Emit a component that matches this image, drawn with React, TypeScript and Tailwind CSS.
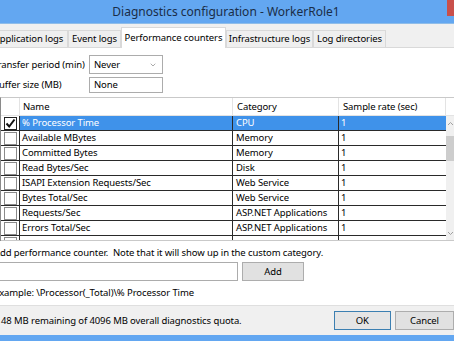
import { ChevronDown } from "lucide-react";

const ROWS: [string, string][] = [
  ["% Processor Time", "CPU"],
  ["Available MBytes", "Memory"],
  ["Committed Bytes", "Memory"],
  ["Read Bytes/Sec", "Disk"],
  ["ISAPI Extension Requests/Sec", "Web Service"],
  ["Bytes Total/Sec", "Web Service"],
  ["Requests/Sec", "ASP.NET Applications"],
  ["Errors Total/Sec", "ASP.NET Applications"],
  ["", ""],
];

const TABS = [
  { label: "Application logs", w: "w-[79px] ml-[-11px]" },
  { label: "Event logs", w: "w-[53px]" },
  { label: "Performance counters", w: "w-[105px]", active: true },
  { label: "Infrastructure logs", w: "w-[87px]" },
  { label: "Log directories", w: "w-[73px]" },
];

function Checkbox({ checked }: { checked?: boolean }) {
  return (
    <div
      className={`w-[13px] h-[13px] bg-white border ${
        checked ? "border-[#222]" : "border-[#8a8a8a]"
      } flex items-center justify-center`}
    >
      {checked && (
        <svg width="11" height="11" viewBox="0 0 11 11">
          <path d="M1.5 5.5 L4.2 8.5 L9.5 1.5" fill="none" stroke="#111" strokeWidth="2" />
        </svg>
      )}
    </div>
  );
}

export default function App() {
  return (
    <div className="w-[454px] h-[341px] overflow-hidden bg-white flex flex-col font-['Noto_Sans',sans-serif] text-[9.5px] tracking-[-0.1px] text-black leading-[12px] whitespace-nowrap">
      {/* Title bar */}
      <div className="relative h-[24px] shrink-0 bg-[#63a7f1] border-b border-[#8fbde9] flex items-center justify-center">
        <span className="text-[12px] tracking-[0px] text-[#1a2d47] ml-[-2px]">Diagnostics configuration - WorkerRole1</span>
        <div className="absolute right-0 top-0 w-[7px] h-[16px] bg-[#c9504b]" />
      </div>

      {/* Tab strip */}
      <div className="h-[24px] shrink-0 bg-[#f0f0f0] flex items-end border-b border-[#d9d9d9]">
        {TABS.map((t) =>
          t.active ? (
            <div
              key={t.label}
              className={`${t.w} h-[21px] mb-[-1px] bg-white border-x border-t border-[#d9d9d9] flex items-center justify-center`}
            >
              {t.label}
            </div>
          ) : (
            <div
              key={t.label}
              className={`${t.w} h-[17px] bg-[#efefef] border-l border-t border-r border-[#d9d9d9] flex items-center justify-center`}
            >
              {t.label}
            </div>
          )
        )}
      </div>

      {/* Content */}
      <div className="flex-1 flex flex-col">
        <div className="flex items-center h-[19px] mt-[7px]">
          <span className="w-[96px] ml-[-7px]">Transfer period (min)</span>
          <div className="w-[74px] h-[19px] border border-[#acacac] bg-white flex items-center justify-between pl-[4px] pr-[5px]">
            <span>Never</span>
            <ChevronDown size={8} strokeWidth={1.5} className="text-[#555]" />
          </div>
        </div>
        <div className="flex items-center h-[16px] mt-[3px]">
          <span className="w-[96px] ml-[-7px]">Buffer size (MB)</span>
          <div className="w-[74px] h-[16px] border border-[#acacac] bg-white flex items-center pl-[4px]">
            None
          </div>
        </div>

        {/* Table */}
        <div className="mt-[4px] h-[144px] border-t border-[#c9c9c9] border-l border-l-[#8a8a8a] flex flex-col">
          <div className="h-[18px] flex border-b border-[#e3e3e3]">
            <div className="w-[19px] border-r border-[#e3e3e3]" />
            <div className="w-[213px] border-r border-[#e3e3e3] pl-[3px] flex items-center">Name</div>
            <div className="w-[106px] border-r border-[#e3e3e3] pl-[4px] flex items-center">Category</div>
            <div className="w-[107px] border-r border-[#e3e3e3] pl-[4px] flex items-center">Sample rate (sec)</div>
            <div className="flex-1" />
          </div>
          <div className="flex h-[125px] border-b border-[#c9c9c9] overflow-hidden">
            <div className="w-[445px] flex flex-col">
              {ROWS.map(([name, cat], i) => {
                const sel = i === 0;
                return (
                  <div key={i} className="h-[15px] shrink-0 flex border-b border-[#2a2a2a]">
                    <div className="w-[19px] shrink-0 border-r border-[#2a2a2a] flex items-center justify-center">
                      <Checkbox checked={sel} />
                    </div>
                    <div
                      className={`w-[213px] shrink-0 border-r border-[#2a2a2a] pl-[2px] flex items-center ${
                        sel ? "bg-[#3f92ea] text-white" : ""
                      }`}
                    >
                      {name}
                    </div>
                    <div
                      className={`w-[106px] shrink-0 border-r border-[#2a2a2a] pl-[3px] flex items-center ${
                        sel ? "bg-[#3f92ea] text-white" : ""
                      }`}
                    >
                      {cat}
                    </div>
                    <div className={`flex-1 pl-[2px] flex items-center ${sel ? "bg-[#3f92ea] text-white" : ""}`}>
                      {name ? "1" : ""}
                    </div>
                  </div>
                );
              })}
            </div>
            {/* Scrollbar */}
            <div className="flex-1 bg-[#f0f0f0] flex flex-col items-center">
              <svg width="7" height="5" viewBox="0 0 7 5" className="mt-[5px]">
                <path d="M1 4 L3.5 1.5 L6 4" fill="none" stroke="#a0a0a0" strokeWidth="1" />
              </svg>
              <div className="w-[8px] h-[25px] mt-[10px] bg-[#cdcdcd]" />
              <div className="flex-1" />
              <svg width="7" height="5" viewBox="0 0 7 5" className="mb-[4px]">
                <path d="M1 1 L3.5 3.5 L6 1" fill="none" stroke="#a0a0a0" strokeWidth="1" />
              </svg>
            </div>
          </div>
        </div>

        <div className="mt-[6px] ml-[-6px] h-[12px] flex items-center">
          Add performance counter.&nbsp; Note that it will show up in the custom category.
        </div>
        <div className="flex items-center mt-[3px] h-[19px]">
          <div className="w-[240px] ml-[-2px] h-[19px] border border-[#acacac] bg-white" />
          <div className="w-[62px] h-[19px] ml-[4px] border border-[#adadad] bg-[#e1e1e1] flex items-center justify-center">
            Add
          </div>
        </div>
        <div className="mt-[6px] ml-[-6px] h-[12px] flex items-center">
          Example: \Processor(_Total)\% Processor Time
        </div>
      </div>

      {/* Footer */}
      <div className="h-[30px] shrink-0 bg-[#f0f0f0] border-t border-[#dfdfdf] flex items-center">
        <span className="ml-[1px] w-[343px]">48 MB remaining of 4096 MB overall diagnostics quota.</span>
        <div className="w-[59px] h-[19px] border border-[#3c7fb1] bg-[#e5e5e5] flex items-center justify-center">OK</div>
        <div className="w-[59px] h-[19px] ml-[4px] shrink-0 border border-[#adadad] bg-[#e1e1e1] flex items-center justify-center">
          Cancel
        </div>
      </div>
      <div className="h-[6px] shrink-0 bg-[#63a7f1]" />
    </div>
  );
}
